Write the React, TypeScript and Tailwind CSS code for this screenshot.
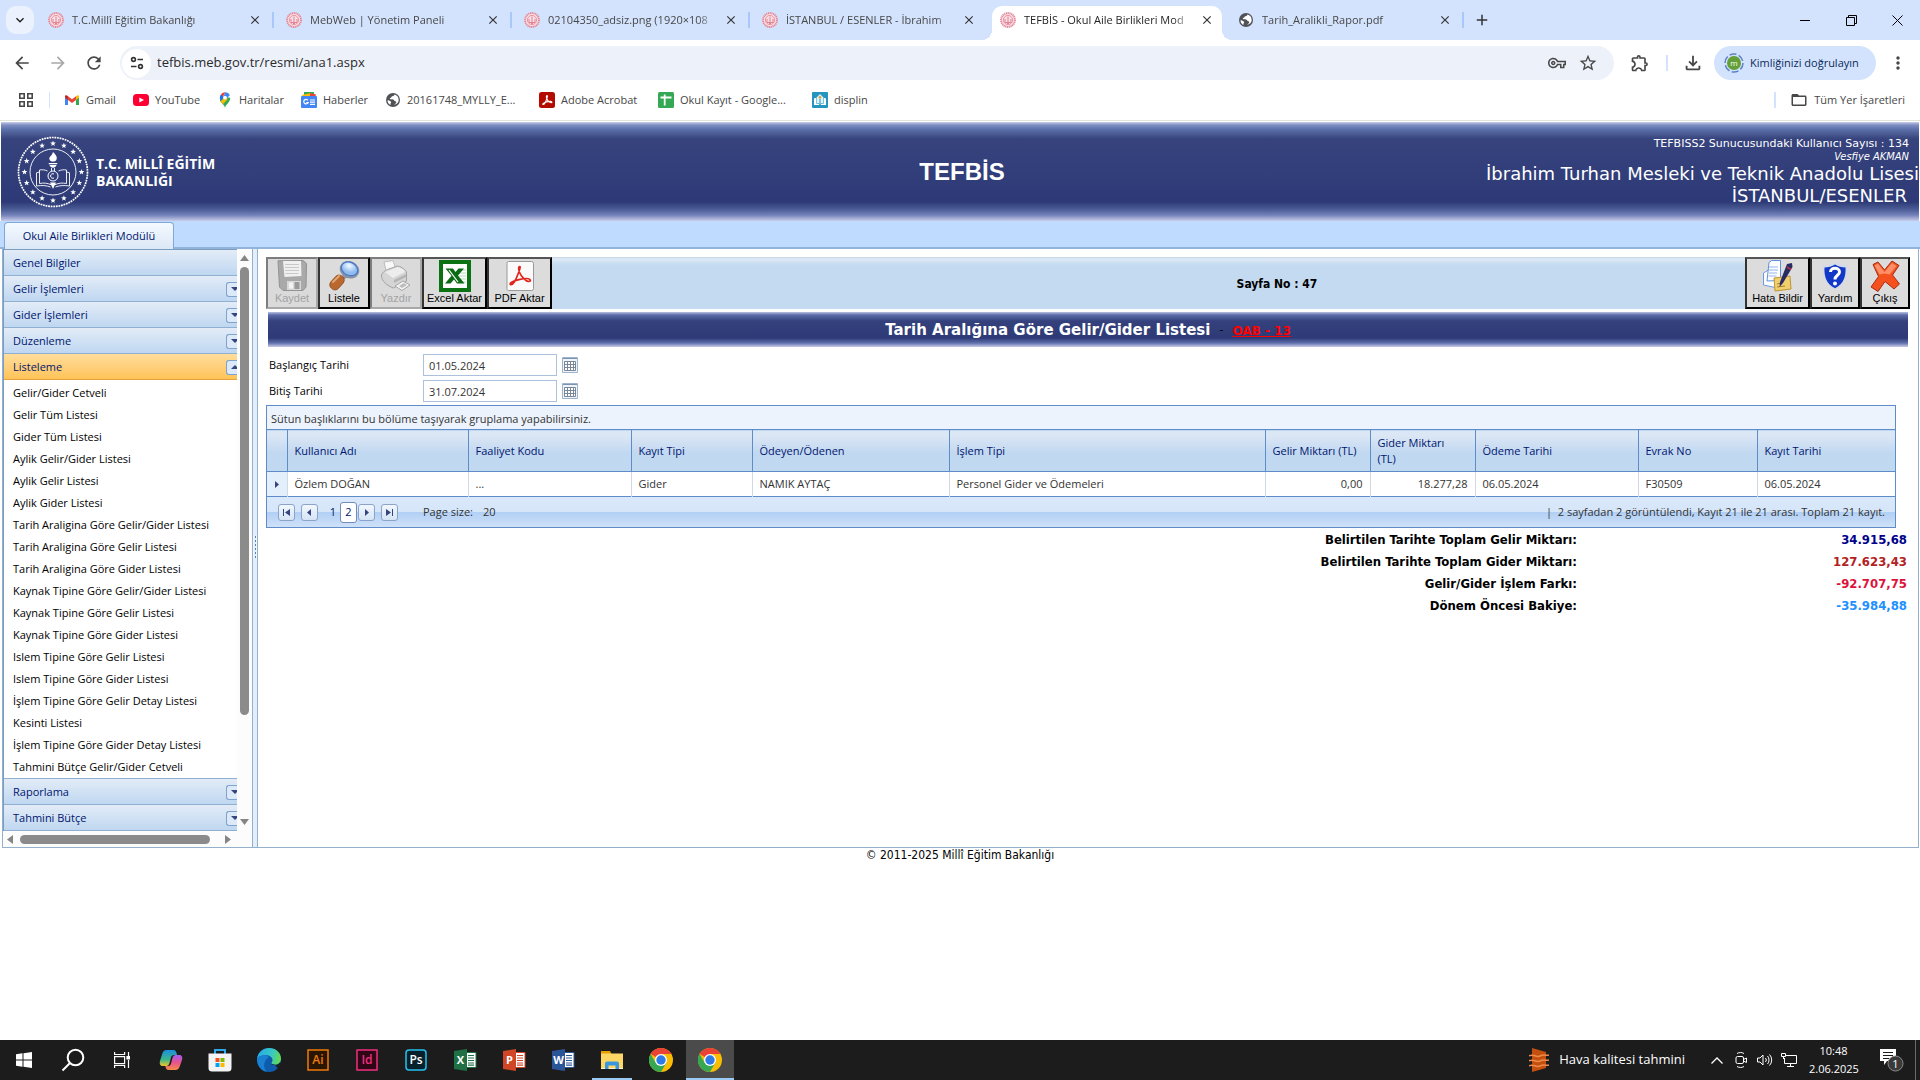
import React, { useState } from 'react';
import {
  MdAdd, MdArrowBack, MdArrowForward, MdClose, MdFolderOpen, MdKeyboardArrowDown, MdMoreVert,
  MdOutlineExtension, MdOutlineFileDownload, MdOutlineVpnKey, MdRefresh, MdStarBorder,
} from 'react-icons/md';

// --- Data ---
const TABS = [
  { title: 'T.C.Millî Eğitim Bakanlığı', icon: 'meb' },
  { title: 'MebWeb | Yönetim Paneli', icon: 'meb' },
  { title: '02104350_adsiz.png (1920×108', icon: 'meb' },
  { title: 'İSTANBUL / ESENLER - İbrahim', icon: 'meb' },
  { title: 'TEFBİS - Okul Aile Birlikleri Mod', icon: 'meb', active: true },
  { title: 'Tarih_Aralikli_Rapor.pdf', icon: 'globe' },
];

const LIST_ITEMS = [
  'Gelir/Gider Cetveli', 'Gelir Tüm Listesi', 'Gider Tüm Listesi', 'Aylik Gelir/Gider Listesi',
  'Aylik Gelir Listesi', 'Aylik Gider Listesi', 'Tarih Araligina Göre Gelir/Gider Listesi',
  'Tarih Araligina Göre Gelir Listesi', 'Tarih Araligina Göre Gider Listesi',
  'Kaynak Tipine Göre Gelir/Gider Listesi', 'Kaynak Tipine Göre Gelir Listesi',
  'Kaynak Tipine Göre Gider Listesi', 'Islem Tipine Göre Gelir Listesi', 'Islem Tipine Göre Gider Listesi',
  'İşlem Tipine Göre Gelir Detay Listesi', 'Kesinti Listesi', 'İşlem Tipine Göre Gider Detay Listesi',
  'Tahmini Bütçe Gelir/Gider Cetveli',
];

const COLUMNS = [
  { label: 'Kullanıcı Adı', value: 'Özlem DOĞAN', width: 'w-[181px]' },
  { label: 'Faaliyet Kodu', value: '...', width: 'w-[163px]' },
  { label: 'Kayıt Tipi', value: 'Gider', width: 'w-[121px]' },
  { label: 'Ödeyen/Ödenen', value: 'NAMIK AYTAÇ', width: 'w-[197px]' },
  { label: 'İşlem Tipi', value: 'Personel Gider ve Ödemeleri', width: 'w-[316px]' },
  { label: 'Gelir Miktarı (TL)', value: '0,00', width: 'w-[105px]', right: true },
  { label: 'Gider Miktarı\n(TL)', value: '18.277,28', width: 'w-[105px]', right: true },
  { label: 'Ödeme Tarihi', value: '06.05.2024', width: 'w-[163px]' },
  { label: 'Evrak No', value: 'F30509', width: 'w-[119px]' },
  { label: 'Kayıt Tarihi', value: '06.05.2024', width: 'w-[138px]' },
];

const TOTALS = [
  { label: 'Belirtilen Tarihte Toplam Gelir Miktarı:', value: '34.915,68', color: 'text-[#00008b]' },
  { label: 'Belirtilen Tarihte Toplam Gider Miktarı:', value: '127.623,43', color: 'text-[#b22222]' },
  { label: 'Gelir/Gider İşlem Farkı:', value: '-92.707,75', color: 'text-[#dc143c]' },
  { label: 'Dönem Öncesi Bakiye:', value: '-35.984,88', color: 'text-[#1e90ff]' },
];

// --- Logos and small icons ---
const star = (cx: number, cy: number, r: number) =>
  Array.from({ length: 10 }, (_, i) => {
    const a = (Math.PI / 5) * i - Math.PI / 2;
    const d = i % 2 ? r * 0.42 : r;
    return `${(cx + d * Math.cos(a)).toFixed(2)},${(cy + d * Math.sin(a)).toFixed(2)}`;
  }).join(' ');

const MebSeal = ({ className }: { className: string }) => (
  <svg className={className} viewBox="0 0 72 72" fill="none" stroke="currentColor">
    <circle cx="36" cy="36" r="34.500" strokeWidth="1.700" strokeDasharray="1.800 .8" />
    <circle cx="36" cy="36" r="23" strokeWidth=".9" />
    <g fill="currentColor" stroke="none">
      {Array.from({ length: 16 }, (_, i) => {
        const a = (Math.PI / 8) * i - Math.PI / 2;
        return <polygon key={i} points={star(36 + 28.5 * Math.cos(a), 36 + 28.5 * Math.sin(a), 3)} />;
      })}
      <path d="M36 16c3 3 4.500 5 3.500 7.500-.5 1.400-1.700 2-3.500 2s-3-.6-3.500-2C31.500 21 35 20 36 16z" />
      <path d="M31.500 27h9l-.5 1.200h-8zM32.500 29h7c-.5 1.700-2 2.700-3.500 2.700s-3-1-3.500-2.700z" />
      <path d="M33 46.500h6L36 53z" />
    </g>
    <path strokeWidth=".9" d="M30.500 35c-2.500-1.200-5.500-1.500-8-1v13.500c4-.8 8-.5 11.500 1.200M41.500 35c2.500-1.200 5.500-1.500 8-1v13.500c-4-.8-8-.5-11.500 1.200M22.500 36l-3 .8V50c5-.8 10-.6 14 1M49.500 36l3 .8V50c-5-.8-10-.6-14 1M34.500 32v3M37.500 32v3" />
    <circle cx="36" cy="40" r="5" strokeWidth="1" />
    <path strokeWidth="1" d="M37 38a2.300 2.300 0 1 0 0 4" />
  </svg>
);

const MebFavicon = () => (
  <svg className="size-4 shrink-0" viewBox="0 0 16 16" fill="none" stroke="#e48391">
    <circle cx="8" cy="8" r="7" strokeWidth="1.800" strokeDasharray="1.200 .6" fill="#f8dfe6" />
    <circle cx="8" cy="8" r="4.600" strokeWidth=".8" />
    <path strokeWidth="1" d="M8 4.500v5.500M5 7v3.500h6V7M6.500 10.500 8 12l1.500-1.500" />
  </svg>
);

const GlobeIcon = () => (
  <svg className="size-4 shrink-0" viewBox="0 0 16 16">
    <circle cx="8" cy="8" r="7" fill="#4f5257" />
    <path fill="#fff" d="M9.500 2.500c-.3 1.300-1 1.500-2.200 1.700-.9.200-.7 1.300-1.700 1.600-.7.200-1 .8-.5 1.300.6.500 2 .1 3 .4 1.300.3 1 1.700 2.300 1.800.9.100 1.100.9.600 1.600-.5.800-1.400.8-1.600 1.900.0 0 4.300-1 4.300-4.800 0-3-1.900-5-4.200-5.500zM2.500 8.200c.8 0 2.300.6 3.200 1.200.8.600.4 1.300-.1 1.800-.4.500.2 1.300-.3 1.700C3.500 12 2.400 10 2.500 8.200z" />
  </svg>
);

const SiteInfoIcon = () => (
  <svg className="size-4" viewBox="0 0 16 16" fill="none" stroke="#333" strokeWidth="1.600">
    <circle cx="4.500" cy="4.500" r="1.900" /><path d="M8.500 4.500H14M2 11.500h5.500" /><circle cx="11.500" cy="11.500" r="1.900" />
  </svg>
);

const AppsIcon = () => (
  <svg className="size-[14px]" viewBox="0 0 14 14" fill="none" stroke="#474747" strokeWidth="1.600">
    <path d="M.8.8h4.400v4.400H.8zM8.800.8h4.400v4.400H8.800zM.8 8.800h4.400v4.400H.8zM8.800 8.800h4.400v4.400H8.800z" />
  </svg>
);

const GmailIcon = () => (
  <svg className="size-4" viewBox="0 0 16 16">
    <path fill="#4285f4" d="M1 5v8h3V7z" /><path fill="#34a853" d="M12 7v6h3V5z" />
    <path fill="#c5221f" d="M1 4.500v1L4 8V4.200C2.600 2.700 1 3 1 4.500z" /><path fill="#fbbc04" d="M15 4.500v1L12 8V4.200C13.400 2.700 15 3 15 4.500z" />
    <path fill="#ea4335" d="M4 4.200 8 7.300l4-3.100V8l-4 3-4-3z" />
  </svg>
);

const YouTubeIcon = () => (
  <svg className="size-4" viewBox="0 0 16 16"><rect y="2" width="16" height="12" rx="3.500" fill="#f03" /><path fill="#fff" d="M6.300 5.400v5.200L11 8z" /></svg>
);

const MapsIcon = () => (
  <svg className="size-4" viewBox="0 0 16 16">
    <path fill="#34a853" d="M8 16c.4-3.500 5.200-5 5.200-10.200L8 5l-5 3.200C3.700 11 7.500 12.500 8 16z" />
    <path fill="#fbbc04" d="M3.700 9.200 9.500 3l1 4.500-4.700 4.800c-.8-1-1.600-1.900-2.100-3.100z" />
    <path fill="#1a73e8" d="M4 2.300 7.500 5 3.600 9C2.500 6.700 2.600 4 4 2.300z" />
    <path fill="#ea4335" d="M4 2.300C5.200.9 6.800.2 8.300.3L6 5z" /><path fill="#4285f4" d="M8.300.3c2 .1 3.800 1.200 4.500 3L9 7 6.500 4.200z" />
    <circle cx="8" cy="5.600" r="1.900" fill="#fff" />
  </svg>
);

const NewsIcon = () => (
  <svg className="size-4" viewBox="0 0 16 16">
    <path fill="#34a853" d="M3 0h10v5H3z" /><path fill="#fbbc04" d="m1 3 9-2 2 5H2z" /><path fill="#ea4335" d="m9 1 6 1.500L14 6H9z" />
    <rect y="4" width="16" height="12" rx="1" fill="#4285f4" />
    <path stroke="#fff" strokeWidth="1.200" fill="none" d="M7 8.300a2.300 2.300 0 1 0 .2 2.200H5.300M9 8h5M9 10.200h5M9 12.400h5" />
  </svg>
);

const AcrobatIcon = () => (
  <svg className="size-4" viewBox="0 0 16 16">
    <rect width="16" height="16" rx="2.500" fill="#b30b00" />
    <path stroke="#fff" strokeWidth="1.100" fill="none" d="M8 3.500c-.8 0-.9 1.500 0 3.500s3 3.700 4.300 3.700.5-1.300-1-1.300-5.500.8-7 2 .3 1.800 1.500-.2S9.300 3.500 8 3.500z" />
  </svg>
);

const SheetsIcon = () => (
  <svg className="size-4" viewBox="0 0 16 16"><rect width="16" height="16" rx="1.500" fill="#34a853" /><path stroke="#fff" strokeWidth="1.800" d="M2.500 5.500h11M6.700 2.500v11" /></svg>
);

const DisplinIcon = () => (
  <svg className="size-4" viewBox="0 0 16 16">
    <rect width="16" height="16" rx="1" fill="#2594bf" />
    <path fill="#fff" d="M2 13V6.500c1-.5 1.500-.5 2-.5v5.500c1.800 0 3 .4 3.500 1.500zM14 13V6.500c-1-.5-1.500-.5-2-.5v5.500c-1.800 0-3 .4-3.500 1.500z" />
    <path fill="#dff2fa" d="M4.500 5.500 8 2l3.500 3.500V11c-1.500 0-2.700.3-3.500 1.200C7.200 11.300 6 11 4.500 11z" /><path stroke="#2594bf" d="M8 6.500V12" /><circle cx="8" cy="5.200" r="1.300" fill="#e0a030" />
  </svg>
);

const BOOKMARKS = [
  { label: 'Gmail', icon: <GmailIcon />, width: 'w-[69px]' },
  { label: 'YouTube', icon: <YouTubeIcon />, width: 'w-[84px]' },
  { label: 'Haritalar', icon: <MapsIcon />, width: 'w-[84px]' },
  { label: 'Haberler', icon: <NewsIcon />, width: 'w-[84px]' },
  { label: '20161748_MYLLY_E...', icon: <GlobeIcon />, width: 'w-[154px]' },
  { label: 'Adobe Acrobat', icon: <AcrobatIcon />, width: 'w-[119px]' },
  { label: 'Okul Kayıt - Google...', icon: <SheetsIcon />, width: 'w-[154px]' },
  { label: 'displin', icon: <DisplinIcon />, width: 'w-[70px]' },
];

// --- Browser ---
const TabStrip = () => (
  <div className="flex h-10 items-center bg-[#d3e3fd]">
    <button aria-label="Sekme ara" className="ml-[6px] flex size-7 items-center justify-center rounded-[10px] bg-[#ecf2fd] text-[#1f1f1f]"><MdKeyboardArrowDown size={16} /></button>
    <div className="ml-[2px] flex h-full">
      {TABS.map((tab, i) => (
        <div key={tab.title} className="relative flex h-full w-[238px] items-end px-1">
          <div className={`flex h-[34px] w-full items-center px-2 pb-[6px] text-[11px] ${tab.active ? 'rounded-t-[10px] bg-white text-[#1f1f1f]' : 'text-[#474747]'}`}>
            {tab.icon === 'meb' ? <MebFavicon /> : <GlobeIcon />}
            <span className="ml-2 w-[166px] whitespace-nowrap [mask-image:linear-gradient(to_right,black_150px,transparent_168px)]">{tab.title}</span>
            <button aria-label="Sekmeyi kapat" className="ml-3 text-[#333]"><MdClose size={14} /></button>
          </div>
          {i !== 3 && i !== 4 && <span className="absolute top-3 right-0 h-4 w-[2px] bg-[#a8c7fa]" />}
          {tab.active && (
            <>
              <span className="absolute bottom-0 -left-[6px] size-[10px] bg-[radial-gradient(circle_at_0_0,#d3e3fd_10px,white_10px)]" />
              <span className="absolute -right-[6px] bottom-0 size-[10px] bg-[radial-gradient(circle_at_100%_0,#d3e3fd_10px,white_10px)]" />
            </>
          )}
        </div>
      ))}
    </div>
    <button aria-label="Yeni sekme" className="ml-[9px] text-[#333]"><MdAdd size={18} /></button>
    <div className="ml-auto flex items-center text-black">
      <button aria-label="Küçült" className="flex w-[46px] justify-center"><svg className="size-[11px]" viewBox="0 0 11 11" stroke="currentColor"><path d="M0 5.500h10" /></svg></button>
      <button aria-label="Geri yükle" className="flex w-[46px] justify-center"><svg className="size-[11px]" viewBox="0 0 11 11" fill="none" stroke="currentColor"><path d="M.5 2.500h8v8h-8zM2.500 2.500v-2h8v8h-2" /></svg></button>
      <button aria-label="Kapat" className="flex w-[46px] justify-center"><svg className="size-[11px]" viewBox="0 0 11 11" stroke="currentColor"><path d="m.5.500 10 10m0-10-10 10" /></svg></button>
    </div>
  </div>
);

const AddressBar = () => (
  <div className="flex h-[46px] items-center text-[#474747]">
    <button aria-label="Geri" className="ml-3"><MdArrowBack size={20} /></button>
    <button aria-label="İleri" className="ml-4 text-[#a9a9a9]"><MdArrowForward size={20} /></button>
    <button aria-label="Yenile" className="ml-4"><MdRefresh size={20} /></button>
    <div className="ml-4 flex h-[34px] flex-1 items-center rounded-full bg-[#edf1fa] pr-4">
      <span className="ml-[2px] flex size-[29px] items-center justify-center rounded-full bg-white"><SiteInfoIcon /></span>
      <label className="sr-only" htmlFor="url">Adres</label>
      <input id="url" type="text" defaultValue="tefbis.meb.gov.tr/resmi/ana1.aspx" className="ml-[6px] flex-1 bg-transparent text-[13px] text-[#2b2b2b] outline-none" />
      <MdOutlineVpnKey size={18} />
      <MdStarBorder size={20} className="ml-3" />
    </div>
    <MdOutlineExtension size={20} className="ml-4" />
    <span className="mr-[14px] ml-4 h-4 w-[2px] bg-[#d3e3fd]" />
    <MdOutlineFileDownload size={22} />
    <button className="ml-[10px] flex h-[34px] w-[162px] items-center gap-[6px] rounded-full bg-[#d3e3fd] pl-[10px] text-[11px] text-[#0b2a5b]">
      <svg className="size-5 shrink-0" viewBox="0 0 20 20">
        <circle cx="10" cy="10" r="9" fill="none" stroke="#5d82c4" strokeWidth="1.500" strokeDasharray="7 2.400" />
        <circle cx="10" cy="10" r="7" fill="#639f36" />
        <text x="10" y="12.500" textAnchor="middle" fontSize="8" fill="#fff">m</text>
      </svg>
      Kimliğinizi doğrulayın
    </button>
    <button aria-label="Menü" className="mx-3"><MdMoreVert size={20} /></button>
  </div>
);

const BookmarksBar = () => (
  <div className="flex h-7 items-center text-[11px] text-[#474747]">
    <button aria-label="Uygulamalar" className="ml-[19px]"><AppsIcon /></button>
    <span className="mr-[14px] ml-4 h-4 w-[1px] bg-[#d3e3fd]" />
    {BOOKMARKS.map(b => (
      <a key={b.label} href="#" className={`flex items-center gap-[6px] whitespace-nowrap ${b.width}`}>{b.icon}{b.label}</a>
    ))}
    <span className="ml-auto h-4 w-[2px] bg-[#d3e3fd]" />
    <a href="#" className="mr-[15px] ml-[14px] flex items-center gap-[6px]"><MdFolderOpen size={18} />Tüm Yer İşaretleri</a>
  </div>
);

// --- TEFBİS header ---
const Banner = () => (
  <header className="relative mx-[1px] flex h-[99px] items-center bg-[linear-gradient(#c9cfe8_0px,#7f8fc4_3px,#5d72ac_7px,#4a5a92_12px,#36437d_17px,#2d3a77_80px,#4f5f99_88px,#7281b8_93px,#c9cbe9_99px)] text-white">
    <MebSeal className="ml-4 size-[72px]" />
    <div className="ml-[7px] font-['Open_Sans',sans-serif] text-[14px] leading-[17px] font-bold">T.C. MİLLÎ EĞİTİM<br />BAKANLIĞI</div>
    <h1 className="absolute inset-x-0 pl-1 text-center font-['Liberation_Sans',sans-serif] text-2xl font-bold">TEFBİS</h1>
    <div className="ml-auto text-right font-['DejaVu_Sans',sans-serif] text-[11px] leading-[13px]">
      <p className="pr-[10px]">TEFBISS2 Sunucusundaki Kullanıcı Sayısı : 134</p>
      <p className="pr-[10px] font-['DejaVu_Sans_Condensed','DejaVu_Sans',sans-serif] italic">Vesfiye AKMAN</p>
      <p className="text-[18px] leading-[22px]">İbrahim Turhan Mesleki ve Teknik Anadolu Lisesi</p>
      <p className="pr-3 text-[18px] leading-[22px]">İSTANBUL/ESENLER</p>
    </div>
  </header>
);

// --- Sidebar ---
const Caret = ({ up = false }: { up?: boolean }) => (
  <span className="ml-auto flex h-[15px] w-[11px] items-center justify-end rounded-l-[3px] border border-r-0 border-[#7fa3cc] bg-[#dce9f8]">
    <svg className="h-1 w-[6px]" viewBox="0 0 6 4"><path fill="#35457f" d={up ? 'M0 4h6V2L4 0z' : 'M0 0h6v2L4 4z'} /></svg>
  </span>
);

const PanelRow = ({ label, open, plain, onClick }: { label: string; open?: boolean; plain?: boolean; onClick?: () => void }) => (
  <button
    onClick={onClick}
    className={`flex h-[26px] w-full items-center border-b pt-px pl-[9px] text-left text-[#00156e] ${open ? 'border-[#e8a23c] bg-linear-to-b from-[#ffdd9b] to-[#ffc357]' : 'border-[#8fb0d1] bg-linear-to-b from-[#e3ecf7] to-[#bfd7f1]'}`}
  >
    {label}{!plain && <Caret up={open} />}
  </button>
);

const Sidebar = () => {
  const [open, setOpen] = useState(true);
  return (
    <aside className="flex w-[250px] shrink-0 flex-col border-l border-[#8fb0d1] text-[11px]">
      <div className="flex">
        <nav className="flex-1 border-t border-l border-[#7b9dbd]">
          <PanelRow label="Genel Bilgiler" plain />
          <PanelRow label="Gelir İşlemleri" />
          <PanelRow label="Gider İşlemleri" />
          <PanelRow label="Düzenleme" />
          <PanelRow label="Listeleme" open={open} onClick={() => setOpen(!open)} />
          {open && (
            <ul className="border-b border-[#8fb0d1] pt-[2px]">
              {LIST_ITEMS.map(item => <li key={item} className="h-[22px] pl-[9px] leading-[22px]"><a href="#" className="whitespace-nowrap text-black">{item}</a></li>)}
            </ul>
          )}
          <PanelRow label="Raporlama" />
          <PanelRow label="Tahmini Bütçe" />
        </nav>
        <div className="flex w-[15px] flex-col items-center bg-[#fcfcfc] py-[6px]">
          <svg className="h-[6px] w-[9px]" viewBox="0 0 9 6"><path fill="#858585" d="M4.500 0 9 6H0z" /></svg>
          <div className="mt-[6px] h-[448px] w-[9px] rounded-full bg-[#8b8b8b]" />
          <svg className="mt-auto h-[6px] w-[9px]" viewBox="0 0 9 6"><path fill="#858585" d="M4.500 6 9 0H0z" /></svg>
        </div>
      </div>
      <div className="flex h-4 items-center bg-[#fcfcfc] pr-[21px] pl-1">
        <svg className="h-[9px] w-[6px]" viewBox="0 0 6 9"><path fill="#858585" d="M0 4.500 6 0v9z" /></svg>
        <div className="ml-[7px] h-[9px] w-[190px] rounded-full bg-[#8b8b8b]" />
        <svg className="ml-auto h-[9px] w-[6px]" viewBox="0 0 6 9"><path fill="#858585" d="M6 4.500 0 0v9z" /></svg>
      </div>
    </aside>
  );
};

// --- Toolbar icons ---
const SaveIcon = () => (
  <svg className="size-8" viewBox="0 0 32 32">
    <path fill="#a9a9a9" stroke="#929292" d="M2 .8 27 .5l3.500 3L30 27l-3 3.500H7L3.500 27z" /><path fill="#f0f0f0" d="M7 1h18l.5 15-17 1z" />
    <path stroke="#c8c8c8" d="M9 4.500h14M9 7.500h14M9 10.500h14M9.500 13.500h13" /><path fill="#d8d8d8" d="M11 21h14v9H11z" /><path fill="#f3f3f3" d="M13 22.500h4v6h-4z" /><path fill="#9a9a9a" d="M18.500 22h5v7h-5z" />
  </svg>
);
const SearchIcon = () => (
  <svg className="size-8" viewBox="0 0 32 32">
    <defs><radialGradient id="lens" cx=".4" cy=".3"><stop offset="0" stopColor="#f4fbff" /><stop offset="1" stopColor="#8fbbee" /></radialGradient></defs>
    <path fill="#8d949c" d="m14 13 4-2 2 6-5 3z" />
    <ellipse cx="21.500" cy="9.800" rx="10" ry="8.500" transform="rotate(25 21.500 9.800)" fill="#8793a5" /><ellipse cx="21.500" cy="8.800" rx="8.500" ry="6.500" transform="rotate(25 21.500 8.800)" fill="url(#lens)" stroke="#4878c9" strokeWidth="1.200" />
    <rect x="1" y="17.500" width="16" height="10" rx="4.500" transform="rotate(-48 9 22.500)" fill="#b9692f" stroke="#8c4c1c" strokeWidth=".8" />
    <path stroke="#e4a873" strokeWidth="2" strokeLinecap="round" d="m5 22 6-6" />
  </svg>
);
const PrintIcon = () => (
  <svg className="size-8" viewBox="0 0 32 32">
    <path fill="#f8f8f8" stroke="#bcbcbc" d="m4 2 9-1.500 3 9-9 5z" /><path fill="#d5d5d5" stroke="#a3a3a3" d="M1.500 16c0-3 3-5 6-6.500l10-3.500c5 1 8 4 9 6v9l-13 7c-6-2-12-7-12-12z" />
    <path fill="#ededed" d="m5 12 13-5c4 1 6 3 7 5l-12 6z" /><path fill="#b5b5b5" d="m14 20 12-6v3l-12 6z" /><path fill="#f3f3f3" stroke="#a5a5a5" d="m15 26 8-5 7 4-8 5.500z" /><path fill="#bdbdbd" d="m19 26 5-3 3 2-5 3z" />
  </svg>
);
const ExcelIcon = () => (
  <svg className="size-8" viewBox="0 0 32 32">
    <path fill="#fff" stroke="#0a7212" strokeWidth="4" d="M2 2h28v28H2z" /><path stroke="#b8d8b8" d="M20 10h7M20 13h7M20 16h7M20 19h7M20 22h7" />
    <path fill="#0a6b14" d="M6.500 8.500h7.500l2.500 3.500 3-3.500h5.500L19 15.500l6.500 8H18l-3-4-3.500 4H6l6.500-7.700z" /><path stroke="#fff" strokeWidth="1.200" d="m10 10 9 12" />
  </svg>
);
const PdfIcon = () => (
  <svg className="size-8" viewBox="0 0 32 32">
    <path fill="#fafafa" stroke="#999" d="M4.500 1.500h23a2 2 0 0 1 2 2v25a2 2 0 0 1-2 2h-23a1.500 1.500 0 0 1-1.500-2v-25q0-2 1.500-2z" />
    <path fill="none" stroke="#e2231a" strokeWidth="1.700" d="M15.800 6.500c-1.500 0-1.500 3 0 6.500s6 8.500 9 8.500 1.500-3-2-3-12.500 1.500-15.500 4 .5 3.500 3-.5 7-15.500 5.500-15.500z" />
  </svg>
);
const ReportIcon = () => (
  <svg className="size-8" viewBox="0 0 32 32">
    <path fill="#fff" stroke="#6c9be0" d="m1.500 13 5-3 9 1v17l-14-3z" /><path fill="#fff" stroke="#5e8fdb" d="M7 2.500 9.500.5h9v20L5 21z" /><path stroke="#90b5ec" d="M7 7h9M7 10h9M7 13h8M6.500 16h8" />
    <path fill="#f0cf6d" stroke="#c09435" d="m12 18 16-2 1 13-16 2z" /><path stroke="#a97f2a" d="m15 24 5-1M15 27l8-1" />
    <path fill="#2b2b63" d="m25 4 5-1 .5 4L21 23l-3.500 4 .5-5z" /><path stroke="#b03048" strokeWidth="1.500" d="m25 7 4 2.500" />
  </svg>
);
const HelpIcon = () => (
  <svg className="size-8" viewBox="0 0 32 32">
    <path fill="#d3d9e8" d="M16 2c4 2.500 8 3 12 3 1 11-2 20-12 25C6 25 3 16 4 5c4 0 8-.5 12-3z" /><path fill="#1238c8" d="M16 4.500c3 2 6.500 2.800 10.500 2.900.5 9-2 16.500-10.500 20.800C7.500 23.900 5 16.400 5.500 7.400c4-.1 7.500-.9 10.500-2.900z" />
    <path fill="none" stroke="#fff" strokeWidth="3" d="M11.500 12c0-5 9-5 9 0 0 3.500-4.500 3-4.500 7.500" /><circle cx="16" cy="23.500" r="2" fill="#fff" />
  </svg>
);
const ExitIcon = () => (
  <svg className="size-8" viewBox="0 0 32 32">
    <path fill="#f4511e" stroke="#a82c10" strokeLinejoin="round" d="M4 4.500 9 2l6.500 8L23 1l7 4.500-6.500 9.500 7 9-5.500 5-9-7.500L9 31.500 2 27l7.500-10.500z" />
    <path fill="#ff8f66" d="m5.500 5.500 3.500-2L15.500 12 23 3l4.500 3-7 8.500-5-1-5 1z" />
  </svg>
);

const ToolButton = ({ label, icon, width, disabled }: { label: string; icon: React.ReactNode; width: string; disabled?: boolean }) => (
  <button
    disabled={disabled}
    className={`flex h-[52px] flex-col items-center border-[2px] pt-px font-['Liberation_Sans',sans-serif] text-[11px] leading-[13px] whitespace-nowrap ${width} ${disabled ? 'border-t-[#7d7d7d] border-r-[#a8a8a8] border-b-[#a8a8a8] border-l-[#7d7d7d] bg-[#dadada] text-[#a3a3a3]' : 'border-t-[#555] border-r-black border-b-black border-l-[#333] bg-[#dcdcdc] text-black'}`}
  >
    {icon}{label}
  </button>
);

const Toolbar = () => (
  <div className="flex h-[52px] bg-[linear-gradient(#c5d5e8_0px,#dfe9f6_2px,#c3daf1_8px)]">
    <ToolButton label="Kaydet" width="w-[52px]" icon={<SaveIcon />} disabled />
    <ToolButton label="Listele" width="w-[52px]" icon={<SearchIcon />} />
    <ToolButton label="Yazdır" width="w-[52px]" icon={<PrintIcon />} disabled />
    <ToolButton label="Excel Aktar" width="w-[65px]" icon={<ExcelIcon />} />
    <ToolButton label="PDF Aktar" width="w-[65px]" icon={<PdfIcon />} />
    <p className="flex-1 self-center pt-px pl-[257px] text-center font-['DejaVu_Sans_Condensed','DejaVu_Sans',sans-serif] text-[12px] font-bold">Sayfa No : 47</p>
    <ToolButton label="Hata Bildir" width="w-[65px]" icon={<ReportIcon />} />
    <ToolButton label="Yardım" width="w-[50px]" icon={<HelpIcon />} />
    <ToolButton label="Çıkış" width="w-[50px]" icon={<ExitIcon />} />
  </div>
);

// --- Date filter ---
const DateField = ({ id, label, value }: { id: string; label: string; value: string }) => (
  <div className="flex h-[22px] items-center text-[11px]">
    <label htmlFor={id} className="w-[154px] text-black">{label}</label>
    <input id={id} type="text" defaultValue={value} className="h-[22px] w-[134px] border border-[#abc1de] px-[5px] text-[#333] outline-none" />
    <button aria-label="Takvim" className="ml-[5px]">
      <svg className="size-4" viewBox="0 0 16 16" fill="none"><path stroke="#9db4cc" fill="#eef4fa" d="M.5.500h15v15H.5z" /><path fill="#7b93ae" d="M1 1h14v1H1z" /><path stroke="#7a8797" fill="#fff" d="M2.500 4.500h11v9h-11zM2.500 7.500h11M2.500 10.500h11M5.500 4.500v9M8.500 4.500v9M11.500 4.500v9" /></svg>
    </button>
  </div>
);

// --- Grid ---
const PageButton = ({ label, d }: { label: string; d: string }) => (
  <button aria-label={label} className="flex h-[17px] w-[17px] items-center justify-center rounded-[3px] border border-[#8aa3c7] bg-linear-to-b from-[#f2f7fd] to-[#d5e4f6]">
    <svg className="h-[7px] w-[9px]" viewBox="0 0 9 7"><path fill="#35457f" d={d} /></svg>
  </button>
);

const Grid = () => (
  <div className="mt-[3px] mr-[14px] border border-[#5d8cc9] text-[11px] text-[#333]">
    <p className="h-[23px] bg-[#ecf3fd] pl-1 leading-[25px]">Sütun başlıklarını bu bölüme taşıyarak gruplama yapabilirsiniz.</p>
    <table className="w-full table-fixed border-collapse">
      <thead>
        <tr className="h-[42px] border-y border-[#5d8cc9] bg-linear-to-b from-[#dce7f5] from-10% to-[#c1d8f1] to-55%">
          <th className="w-5" />
          {COLUMNS.map(c => <th key={c.label} className={`border-l border-[#5d8cc9] pt-px pr-1 pl-[7px] text-left leading-4 font-normal whitespace-pre-line text-[#00156e] ${c.width}`}>{c.label}</th>)}
        </tr>
      </thead>
      <tbody>
        <tr className="h-[25px] border-b border-[#5d8cc9]">
          <td className="bg-[#e4effc]"><svg className="mx-auto h-[7px] w-1" viewBox="0 0 4 7"><path fill="#35457f" d="M0 0v7l4-3.500z" /></svg></td>
          {COLUMNS.map(c => <td key={c.label} className={`border-l border-[#d0d7e5] px-[7px] pt-px ${c.right ? 'text-right' : ''}`}>{c.value}</td>)}
        </tr>
      </tbody>
    </table>
    <div className="flex h-[30px] items-center bg-[linear-gradient(#d9e8fa_0%,#d6e6f9_50%,#b1cff5_50%,#cfe1f8_100%)] pr-[10px] pl-[11px]">
      <PageButton label="İlk sayfa" d="M1 0h1v7H1zM8 0v7L3 3.500z" />
      <span className="w-[6px]" />
      <PageButton label="Önceki sayfa" d="M6 0v7L2 3.500z" />
      <a href="#" className="ml-2 w-[14px] text-center text-[#00156e]">1</a>
      <span className="flex h-[21px] w-[17px] items-center justify-center rounded-[3px] border border-[#6f8db8] bg-white text-[#00156e]">2</span>
      <span className="w-[1px]" />
      <PageButton label="Sonraki sayfa" d="M3 0v7l4-3.500z" />
      <span className="w-[6px]" />
      <PageButton label="Son sayfa" d="M7 0h1v7H7zM1 0v7l5-3.500z" />
      <span className="ml-[25px]">Page size:</span><span className="ml-[10px]">20</span>
      <span className="ml-auto">|&nbsp; 2 sayfadan 2 görüntülendi, Kayıt 21 ile 21 arası. Toplam 21 kayıt.</span>
    </div>
  </div>
);

// --- Taskbar ---
const ChromeLogo = () => (
  <svg className="size-6" viewBox="0 0 24 24">
    <circle cx="12" cy="12" r="12" fill="#fbbc04" />
    <path fill="#ea4335" d="M12 12 1.600 6A12 12 0 0 1 22.400 6H12z" /><path fill="#34a853" d="M1.600 6A12 12 0 0 0 12 24l5.200-9L12 12l-5.200 3z" />
    <circle cx="12" cy="12" r="6" fill="#fff" /><circle cx="12" cy="12" r="4.700" fill="#2c7be9" />
  </svg>
);

const AdobeLogo = ({ text, color, bg, round = 0 }: { text: string; color: string; bg: string; round?: number }) => (
  <svg className="size-[22px]" viewBox="0 0 22 22">
    <rect x="1" y="1" width="20" height="20" rx={round} fill={bg} stroke={color} strokeWidth="1.500" />
    <text x="11" y="15" textAnchor="middle" fontSize="12" fontWeight="600" fill={text === 'Ps' ? '#fff' : color}>{text}</text>
  </svg>
);

const OfficeLogo = ({ text, color }: { text: string; color: string }) => (
  <svg className="size-6" viewBox="0 0 24 24">
    <path fill="#fff" stroke={color} d="M12 4.500h11v15H12z" /><path stroke={color} strokeWidth="1.200" d="M15 7.500h6M15 10h6M15 12.500h6M15 15h6M15 17.200h6" />
    <path fill={color} d="M1 3 14 1v22L1 21z" /><text x="7.500" y="16" textAnchor="middle" fontSize="11" fontWeight="700" fill="#fff">{text}</text>
  </svg>
);

const TASKS: { name: string; icon: React.ReactNode; running?: boolean; active?: boolean }[] = [
  { name: 'Başlat', icon: <svg className="size-4" viewBox="0 0 16 16" fill="#fff"><path d="M0 2.200 6.500 1.300v6.200H0zM7.500 1.200 16 0v7.500H7.500zM0 8.500h6.500v6.200L0 13.800zM7.500 8.500H16V16l-8.500-1.200z" /></svg> },
  { name: 'Ara', icon: <svg className="size-6" viewBox="0 0 24 24" fill="none" stroke="#fff" strokeWidth="2"><circle cx="14.500" cy="9.500" r="7.800" /><path d="M9 15 1.500 22.500" /></svg> },
  { name: 'Görev görünümü', icon: <svg className="size-4" viewBox="0 0 16 16" fill="none" stroke="#fff" strokeWidth="1.200"><path d="M.6 4.600h10v7H.6zM.6 0v2.500h10V0M.6 16v-2.500h10V16M14.500 0v4M14.500 8v8" /><path d="M13 4.500h3v2.500h-3z" fill="#fff" /></svg> },
  { name: 'Copilot', icon: (
    <svg className="size-6" viewBox="0 0 24 24">
      <defs>
        <linearGradient id="cpA" x1="0" y1="0" x2="0" y2="1"><stop offset="0" stopColor="#1b8fe0" /><stop offset=".6" stopColor="#3bb68a" /><stop offset="1" stopColor="#f0c52b" /></linearGradient>
        <linearGradient id="cpB" x1="0" y1="0" x2="0" y2="1"><stop offset="0" stopColor="#a55bf0" /><stop offset=".5" stopColor="#e8528e" /><stop offset="1" stopColor="#f78b45" /></linearGradient>
      </defs>
      <path fill="url(#cpA)" d="M7.500 2h7c2 0 2.500 1.500 3 3l.6 2h-3c-2 0-2.700 1-3.200 2.800L10.500 15c-.6 2-1.500 3-3.300 3H3.500C1 18 .3 15.500 1 13l2.500-8C4.300 3 5.500 2 7.500 2z" />
      <path fill="url(#cpB)" d="M16.500 22h-7c-2 0-2.500-1.500-3-3l-.2-1h2.600c2 0 2.700-1 3.200-2.800L13.500 10c.6-2 1.500-3 3.300-3h3.700c2.500 0 3.200 2.500 2.500 5l-2.500 7c-.8 2-2 3-4 3z" />
    </svg>) },
  { name: 'Microsoft Store', icon: <svg className="size-6" viewBox="0 0 24 24"><path fill="none" stroke="#2ca9e8" strokeWidth="2" d="M7 6V2h10v4" /><path fill="#f3f3f3" d="M.5 5.500h23V20a3.500 3.500 0 0 1-3.500 3.500H4A3.500 3.500 0 0 1 .5 20z" /><path fill="#f25022" d="M7.500 10h4v4h-4z" /><path fill="#7fba00" d="M12.500 10h4v4h-4z" /><path fill="#00a4ef" d="M7.500 15h4v4h-4z" /><path fill="#ffb900" d="M12.500 15h4v4h-4z" /></svg> },
  { name: 'Edge', icon: (
    <svg className="size-6" viewBox="0 0 24 24">
      <defs><linearGradient id="edge" x1="0" y1=".3" x2="1" y2=".5"><stop offset="0" stopColor="#28a8e8" /><stop offset=".6" stopColor="#36c8c4" /><stop offset="1" stopColor="#66d852" /></linearGradient></defs>
      <circle cx="12" cy="12" r="12" fill="#0f5cad" /><path fill="#1c1c1c" d="M14 11.500c2 3 1 4 .2 4.800 3 1.500 7 .7 9-2.300L24 16l-3 5z" opacity=".9" />
      <path fill="url(#edge)" d="M0 11C1 4 6 0 12 0c7 0 12 5 12 10.500 0 4-3 6-6 6-2.500 0-3.700-.8-3.500-1.500.3-.9 1-1.500 1-3C15.500 9 12 6.800 8 7 4 7.200 1 9 0 11z" />
      <path fill="#1a80d2" d="M8 7c-4 .2-7 2-8 4-.2 6 4 12 10 13C5.500 20 6.500 12 11.500 9.500 12.500 9 10 7 8 7z" />
    </svg>) },
  { name: 'Illustrator', icon: <AdobeLogo text="Ai" color="#f07a0c" bg="#2a1500" /> },
  { name: 'InDesign', icon: <AdobeLogo text="Id" color="#ef2f7f" bg="#2e0616" /> },
  { name: 'Photoshop', icon: <AdobeLogo text="Ps" color="#29c0f0" bg="#06202c" round={3} /> },
  { name: 'Excel', icon: <OfficeLogo text="X" color="#1f7145" /> },
  { name: 'PowerPoint', icon: <OfficeLogo text="P" color="#d04525" /> },
  { name: 'Word', icon: <OfficeLogo text="W" color="#2a5699" /> },
  { name: 'Dosya Gezgini', running: true, icon: <svg className="size-6" viewBox="0 0 24 24"><path fill="#e5a000" d="M1 3h9l1.500 3H1z" /><path fill="#fdd766" d="M1 5.500h22V21H1z" /><path fill="#fff" d="M1 20h22v1H1z" opacity=".7" /><path fill="#3a96dd" d="M5 21v-5.500a2 2 0 0 1 2-2h10a2 2 0 0 1 2 2V21h-3.500v-3.500h-7V21z" /></svg> },
  { name: 'Chrome', icon: <ChromeLogo /> },
  { name: 'Chrome', icon: <ChromeLogo />, running: true, active: true },
];

const Taskbar = () => (
  <footer className="mt-auto flex h-10 items-center bg-[#1c1c1c] text-white">
    <div className="flex h-full gap-[1px]">
      {TASKS.map((t, i) => (
        <button key={i} aria-label={t.name} className={`relative flex h-full w-12 items-center justify-center ${t.active ? 'bg-[#4b4b4b]' : ''}`}>
          {t.icon}
          {t.running && <span className={`absolute bottom-0 h-[2px] bg-[#99cbf5] ${t.active ? 'inset-x-0' : 'inset-x-1'}`} />}
        </button>
      ))}
    </div>
    <div className="ml-auto flex h-full items-center">
      <svg className="h-6 w-5" viewBox="0 0 20 24"><path fill="#c4500f" d="m3 0 14 4v16L3 24z" /><path fill="none" stroke="#ef8a4c" strokeWidth="1.500" d="M0 8c4-3 7 2 11 0s6 0 9-1M0 13c4-3 7 2 11 0s6 0 9-1M0 18c4-3 7 2 11 0s6 0 9-1" /></svg>
      <span className="ml-[10px] text-[13px]">Hava kalitesi tahmini</span>
      <svg className="ml-[26px] h-[7px] w-3" viewBox="0 0 12 7" fill="none" stroke="#fff" strokeWidth="1.300"><path d="M.5 6.500 6 1l5.500 5.500" /></svg>
      <svg className="ml-[10px] size-4" viewBox="0 0 16 16" fill="none" stroke="#fff"><rect x="3" y="4.500" width="7.500" height="7" rx="1.500" /><path d="m10.500 7.500 3-1.500v4.500l-3-1.500M4 1.500c2-1.300 5-1.300 7 0M4 14.500c2 1.300 5 1.300 7 0" /></svg>
      <svg className="ml-2 size-4" viewBox="0 0 16 16" fill="none" stroke="#fff"><path d="M.5 6v4H3l3 3V3L3 6zM8.500 6a3 3 0 0 1 0 4M10.500 4a6 6 0 0 1 0 8M12.500 2.500a8 8 0 0 1 0 11" /></svg>
      <svg className="ml-2 size-4" viewBox="0 0 16 16" fill="none" stroke="#fff"><path d="M4.500 3.500h11v8H3.500V6M9.500 11.500v3M6 14.500h7M.5 1.500h4v3h-4zM2.500 4.500V7" /></svg>
      <div className="ml-3 w-[49px] text-center text-[11px] leading-[18px] whitespace-nowrap">10:48<br />2.06.2025</div>
      <svg className="ml-[22px] size-6" viewBox="0 0 24 24"><path fill="#fff" d="M0 1h16v12H7l-3 4v-4H0z" /><path stroke="#1c1c1c" d="M3 4.500h10M3 7.500h10M3 10.500h6" /><circle cx="15.500" cy="15.500" r="7.500" fill="#3a3a3a" stroke="#8a8a8a" /><text x="15.500" y="19.500" textAnchor="middle" fontSize="11" fill="#fff">1</text></svg>
      <span className="ml-[11px] mr-1 h-full w-[1px] bg-[#6a6a6a]" />
    </div>
  </footer>
);

export default function App() {
  return (
    <div className="flex min-h-screen flex-col bg-white font-['Open_Sans','Noto_Sans',sans-serif]">
      <TabStrip />
      <AddressBar />
      <BookmarksBar />
      <div className="mb-[1px] h-[7px] border-b border-[#dfe3dc]" />

      <Banner />
      <div className="flex h-7 items-end border-b-2 border-[#93b4da] bg-[#bfdbff] pl-1">
        <button className="-mb-[2px] h-[27px] w-[170px] rounded-t-[4px] border border-b-0 border-[#7fa8d9] bg-linear-to-b from-[#f4f9ff] to-[#dce8f6] text-[11px] text-[#00156e]">Okul Aile Birlikleri Modülü</button>
      </div>

      <main className="mr-[1px] ml-[2px] flex border-r border-b border-[#93b0cc]">
        <Sidebar />
        <div className="flex w-[6px] shrink-0 items-center border-x border-[#93b0cc] bg-[#e3edfb]">
          <div className="mb-[2px] h-6 w-full border-x border-[#f4f8fe] bg-[radial-gradient(#5f7fb5_1px,transparent_1px)] bg-[size:4px_4px]" />
        </div>
        <section className="min-w-0 flex-1 px-2 pt-2">
          <Toolbar />
          <div className="mx-[2px] mt-[3px] flex h-[35px] items-center justify-center gap-[9px] bg-[linear-gradient(#b9c0e2_0px,#5b6ca8_3px,#35417c_9px,#2d3a77_26px,#5f6fab_31px,#c9cbe9_35px)] pt-[2px] font-['DejaVu_Sans',sans-serif] font-bold">
            <h2 className="text-[15px] text-white">Tarih Aralığına Göre Gelir/Gider Listesi</h2>
            <span className="text-[11px] font-normal text-black">-</span>
            <a href="#" className="text-[12px] text-[#ff0000] underline">OAB - 13</a>
          </div>
          <form className="mt-[7px] flex flex-col gap-1 pl-[3px]">
            <DateField id="start" label="Başlangıç Tarihi" value="01.05.2024" />
            <DateField id="end" label="Bitiş Tarihi" value="31.07.2024" />
          </form>
          <Grid />
          <dl className="mt-[1px] pr-[3px] text-right font-['DejaVu_Sans_Condensed','DejaVu_Sans',sans-serif] text-[13px] leading-[22px] font-bold">
            {TOTALS.map(t => (
              <div key={t.label} className="flex justify-end">
                <dt className="text-black">{t.label}</dt>
                <dd className={`w-[330px] ${t.color}`}>{t.value}</dd>
              </div>
            ))}
          </dl>
        </section>
      </main>
      <p className="text-center font-['DejaVu_Sans_Condensed','DejaVu_Sans',sans-serif] text-[12px] leading-[15px] text-black">© 2011-2025 Millî Eğitim Bakanlığı</p>

      <Taskbar />
    </div>
  );
}
